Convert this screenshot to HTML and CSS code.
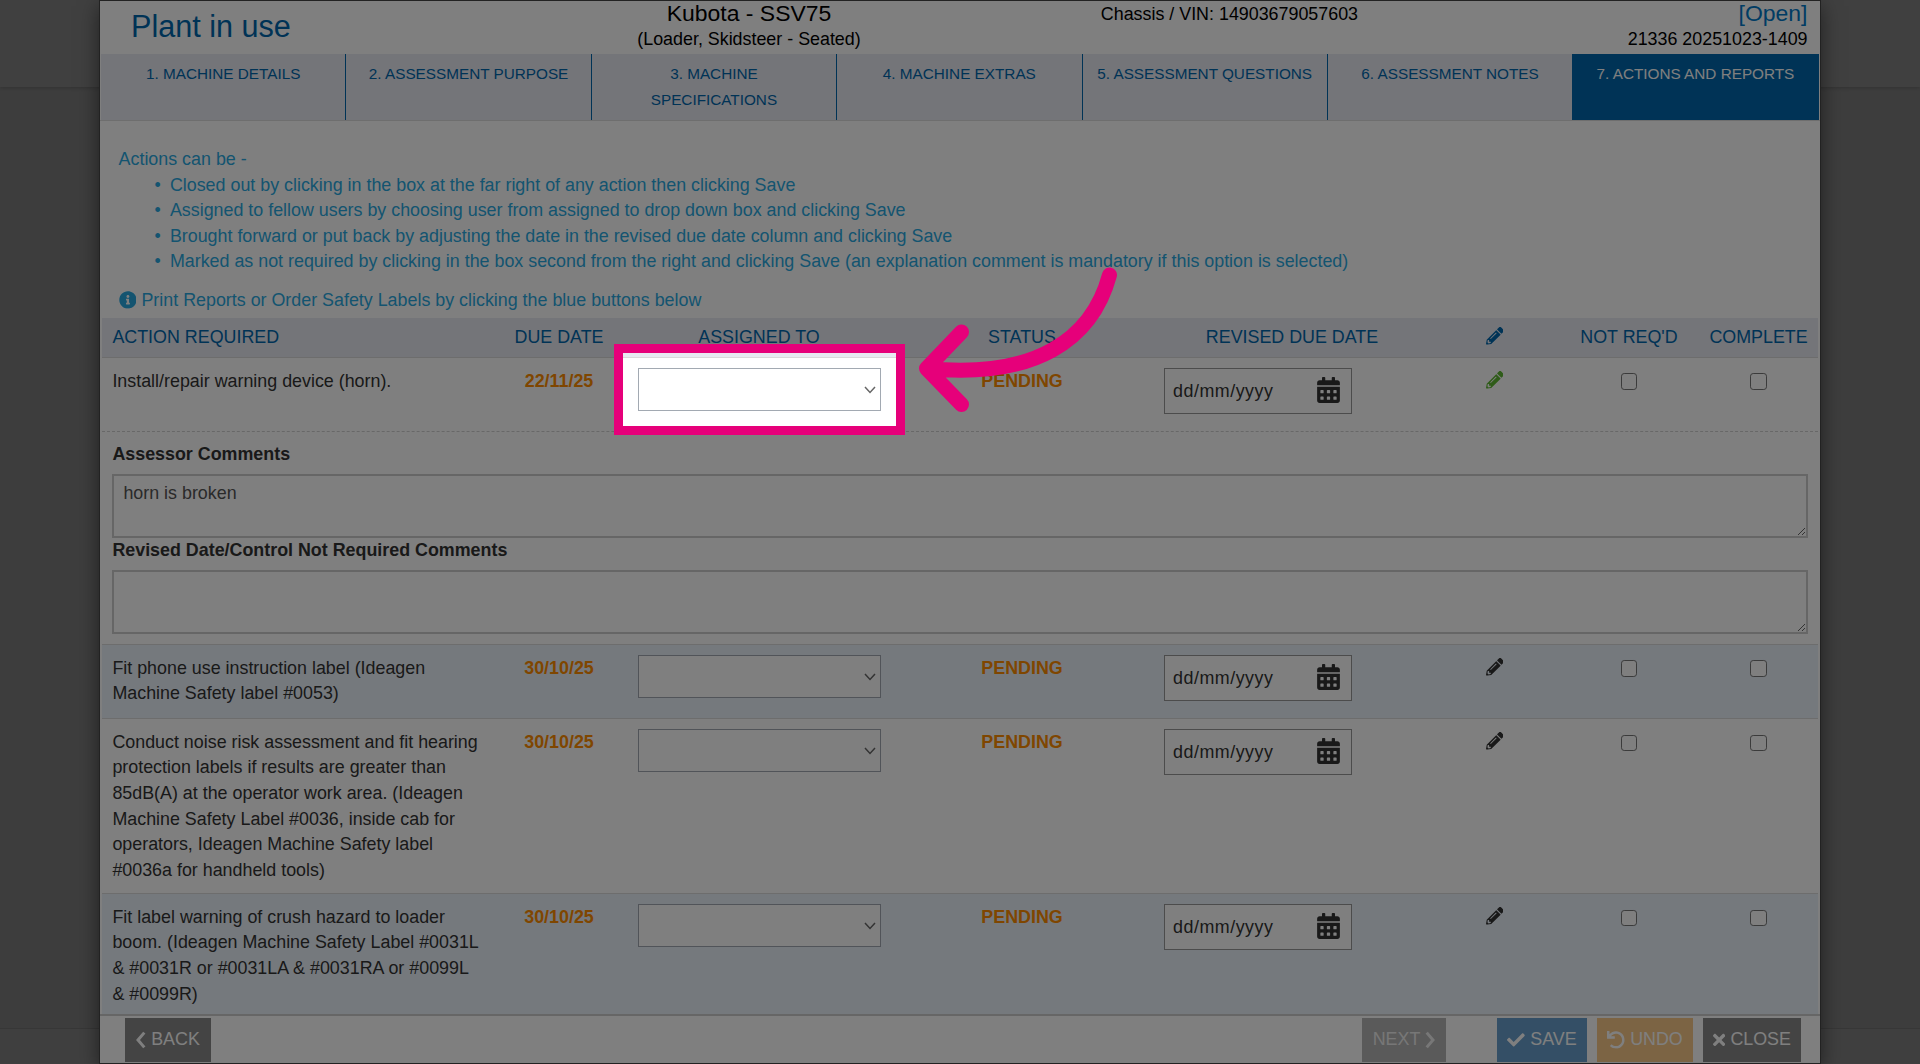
FILE: index.html
```
<!DOCTYPE html>
<html lang="en">
<head>
    <meta charset="UTF-8">
    <meta name="viewport" content="width=device-width, initial-scale=1.0">
    <title>Plant in use</title>
    <link rel="stylesheet" href="styles.css">
</head>
<body>
    <!-- Icon sprite -->
    <svg class="sprite" width="0" height="0">
        <symbol id="i-info" viewBox="0 0 512 512"><path d="M256 8C119.043 8 8 119.083 8 256c0 136.997 111.043 248 248 248s248-111.003 248-248C504 119.083 392.957 8 256 8zm0 110c23.196 0 42 18.804 42 42s-18.804 42-42 42-42-18.804-42-42 18.804-42 42-42zm56 254c0 6.627-5.373 12-12 12h-88c-6.627 0-12-5.373-12-12v-24c0-6.627 5.373-12 12-12h12v-64h-12c-6.627 0-12-5.373-12-12v-24c0-6.627 5.373-12 12-12h64c6.627 0 12 5.373 12 12v100h12c6.627 0 12 5.373 12 12v24z"/></symbol>
        <symbol id="i-pencil" viewBox="0 0 512 512"><path d="M497.9 142.1l-46.1 46.1c-4.7 4.7-12.3 4.7-17 0l-111-111c-4.7-4.7-4.7-12.3 0-17l46.1-46.1c18.7-18.7 49.1-18.7 67.9 0l60.1 60.1c18.8 18.7 18.8 49.1 0 67.9zM284.2 99.8L21.6 362.4.4 483.9c-2.9 16.4 11.4 30.6 27.8 27.8l121.5-21.3 262.6-262.6c4.7-4.7 4.7-12.3 0-17l-111-111c-4.8-4.7-12.4-4.7-17.1 0zM124.1 339.9c-5.5-5.5-5.5-14.3 0-19.8l154-154c5.5-5.5 14.3-5.5 19.8 0s5.5 14.3 0 19.8l-154 154c-5.5 5.5-14.3 5.5-19.8 0zM88 424h48v36.3l-64.5 11.3-31.1-31.1L51.7 376H88v48z"/></symbol>
        <symbol id="i-calendar" viewBox="0 0 448 512"><path d="M0 464c0 26.5 21.5 48 48 48h352c26.5 0 48-21.5 48-48V192H0v272zm320-196c0-6.6 5.4-12 12-12h40c6.6 0 12 5.4 12 12v40c0 6.6-5.4 12-12 12h-40c-6.6 0-12-5.4-12-12v-40zm0 128c0-6.6 5.4-12 12-12h40c6.6 0 12 5.4 12 12v40c0 6.6-5.4 12-12 12h-40c-6.6 0-12-5.4-12-12v-40zM192 268c0-6.6 5.4-12 12-12h40c6.6 0 12 5.4 12 12v40c0 6.6-5.4 12-12 12h-40c-6.6 0-12-5.4-12-12v-40zm0 128c0-6.6 5.4-12 12-12h40c6.6 0 12 5.4 12 12v40c0 6.6-5.4 12-12 12h-40c-6.6 0-12-5.4-12-12v-40zM64 268c0-6.6 5.4-12 12-12h40c6.6 0 12 5.4 12 12v40c0 6.6-5.4 12-12 12H76c-6.6 0-12-5.4-12-12v-40zm0 128c0-6.6 5.4-12 12-12h40c6.6 0 12 5.4 12 12v40c0 6.6-5.4 12-12 12H76c-6.6 0-12-5.4-12-12v-40zM400 64h-48V16c0-8.8-7.2-16-16-16h-32c-8.8 0-16 7.2-16 16v48H160V16c0-8.8-7.2-16-16-16h-32c-8.8 0-16 7.2-16 16v48H48C21.5 64 0 85.5 0 112v48h448v-48c0-26.5-21.5-48-48-48z"/></symbol>
        <symbol id="i-down" viewBox="0 0 12 8"><path d="M1 1l5 5.4L11 1" fill="none" stroke="currentColor" stroke-width="1.5"/></symbol>
        <symbol id="i-left" viewBox="0 0 10 18"><path d="M8.3 1.6L2 9l6.3 7.4" fill="none" stroke="currentColor" stroke-width="3"/></symbol>
        <symbol id="i-right" viewBox="0 0 10 18"><path d="M1.7 1.6L8 9l-6.3 7.4" fill="none" stroke="currentColor" stroke-width="3"/></symbol>
        <symbol id="i-check" viewBox="0 0 512 512"><path d="M173.898 439.404l-166.4-166.4c-9.997-9.997-9.997-26.206 0-36.204l36.203-36.204c9.997-9.998 26.207-9.998 36.204 0L192 312.69 432.095 72.596c9.997-9.997 26.207-9.997 36.204 0l36.203 36.204c9.997 9.997 9.997 26.206 0 36.204l-294.4 294.401c-9.998 9.997-26.207 9.997-36.204-.001z"/></symbol>
        <symbol id="i-undo" viewBox="0 0 512 512"><path d="M212.333 224.333H12c-6.627 0-12-5.373-12-12V12C0 5.373 5.373 0 12 0h48c6.627 0 12 5.373 12 12v78.112C117.773 39.279 184.26 7.47 258.175 8.007c136.906.994 246.448 111.623 246.157 248.532C504.041 393.258 393.12 504 256.333 504c-64.089 0-122.496-24.313-166.51-64.215-5.099-4.622-5.334-12.554-.467-17.42l33.967-33.967c4.474-4.474 11.662-4.717 16.401-.525C170.76 415.336 211.58 432 256.333 432c97.268 0 176-78.716 176-176 0-97.267-78.716-176-176-176-58.496 0-110.28 28.476-142.274 72.333h98.274c6.627 0 12 5.373 12 12v48c0 6.627-5.373 12-12 12z"/></symbol>
        <symbol id="i-times" viewBox="0 0 352 512"><path d="M242.72 256l100.07-100.07c12.28-12.28 12.28-32.19 0-44.48l-22.24-22.24c-12.28-12.28-32.19-12.28-44.48 0L176 189.28 75.93 89.21c-12.28-12.28-32.19-12.28-44.48 0L9.21 111.45c-12.28 12.28-12.28 32.19 0 44.48L109.28 256 9.21 356.07c-12.28 12.28-12.28 32.19 0 44.48l22.24 22.24c12.28 12.28 32.2 12.28 44.48 0L176 322.72l100.07 100.07c12.28 12.28 32.2 12.28 44.48 0l22.24-22.24c12.28-12.28 12.28-32.19 0-44.48L242.72 256z"/></symbol>
    </svg>

    <div class="page">
        <div class="page-top"></div>
        <div class="page-main"></div>
        <div class="page-bottom"></div>
    </div>

    <div class="modal">
        <header class="modal-header">
            <h1>Plant in use</h1>
            <div class="machine">
                <div class="large">Kubota - SSV75</div>
                <div>(Loader, Skidsteer - Seated)</div>
            </div>
            <div class="chassis">Chassis / VIN: 14903679057603</div>
            <div class="state">
                <div class="large open">[Open]</div>
                <div>21336 20251023-1409</div>
            </div>
        </header>

        <nav class="tabs">
            <a class="tab">1. MACHINE DETAILS</a>
            <a class="tab">2. ASSESSMENT PURPOSE</a>
            <a class="tab">3. MACHINE<br>SPECIFICATIONS</a>
            <a class="tab">4. MACHINE EXTRAS</a>
            <a class="tab">5. ASSESSMENT QUESTIONS</a>
            <a class="tab">6. ASSESSMENT NOTES</a>
            <a class="tab active">7. ACTIONS AND REPORTS</a>
        </nav>

        <div class="modal-body">
            <div class="info">
                <p>Actions can be -</p>
                <ul>
                    <li>Closed out by clicking in the box at the far right of any action then clicking Save</li>
                    <li>Assigned to fellow users by choosing user from assigned to drop down box and clicking Save</li>
                    <li>Brought forward or put back by adjusting the date in the revised due date column and clicking Save</li>
                    <li>Marked as not required by clicking in the box second from the right and clicking Save (an explanation comment is mandatory if this option is selected)</li>
                </ul>
                <p class="print"><svg class="icon"><use href="#i-info"/></svg>Print Reports or Order Safety Labels by clicking the blue buttons below</p>
            </div>

            <div class="row head">
                <div>ACTION REQUIRED</div>
                <div class="center">DUE DATE</div>
                <div class="center">ASSIGNED TO</div>
                <div class="center">STATUS</div>
                <div class="center">REVISED DUE DATE</div>
                <div class="center"><svg class="icon"><use href="#i-pencil"/></svg></div>
                <div class="center">NOT REQ'D</div>
                <div class="center">COMPLETE</div>
            </div>

            <div class="row first">
                <div>Install/repair warning device (horn).</div>
                <div class="center due">22/11/25</div>
                <div class="field"><select></select><svg class="arrow"><use href="#i-down"/></svg></div>
                <div class="center due">PENDING</div>
                <div class="field"><div class="date"><span>dd/mm/yyyy</span><svg class="calendar"><use href="#i-calendar"/></svg></div></div>
                <div class="center"><svg class="icon green"><use href="#i-pencil"/></svg></div>
                <div class="center"><input type="checkbox"></div>
                <div class="center"><input type="checkbox"></div>
            </div>

            <div class="comments">
                <label for="assessor">Assessor Comments</label>
                <textarea id="assessor">horn is broken</textarea>
                <label for="revised">Revised Date/Control Not Required Comments</label>
                <textarea id="revised"></textarea>
            </div>

            <div class="row shaded">
                <div>Fit phone use instruction label (Ideagen Machine Safety label #0053)</div>
                <div class="center due">30/10/25</div>
                <div class="field"><select></select><svg class="arrow"><use href="#i-down"/></svg></div>
                <div class="center due">PENDING</div>
                <div class="field"><div class="date"><span>dd/mm/yyyy</span><svg class="calendar"><use href="#i-calendar"/></svg></div></div>
                <div class="center"><svg class="icon"><use href="#i-pencil"/></svg></div>
                <div class="center"><input type="checkbox"></div>
                <div class="center"><input type="checkbox"></div>
            </div>

            <div class="row">
                <div>Conduct noise risk assessment and fit hearing protection labels if results are greater than 85dB(A) at the operator work area. (Ideagen Machine Safety Label #0036, inside cab for operators, Ideagen Machine Safety label #0036a for handheld tools)</div>
                <div class="center due">30/10/25</div>
                <div class="field"><select></select><svg class="arrow"><use href="#i-down"/></svg></div>
                <div class="center due">PENDING</div>
                <div class="field"><div class="date"><span>dd/mm/yyyy</span><svg class="calendar"><use href="#i-calendar"/></svg></div></div>
                <div class="center"><svg class="icon"><use href="#i-pencil"/></svg></div>
                <div class="center"><input type="checkbox"></div>
                <div class="center"><input type="checkbox"></div>
            </div>

            <div class="row shaded">
                <div>Fit label warning of crush hazard to loader boom. (Ideagen Machine Safety Label #0031L &amp; #0031R or #0031LA &amp; #0031RA or #0099L &amp; #0099R)</div>
                <div class="center due">30/10/25</div>
                <div class="field"><select></select><svg class="arrow"><use href="#i-down"/></svg></div>
                <div class="center due">PENDING</div>
                <div class="field"><div class="date"><span>dd/mm/yyyy</span><svg class="calendar"><use href="#i-calendar"/></svg></div></div>
                <div class="center"><svg class="icon"><use href="#i-pencil"/></svg></div>
                <div class="center"><input type="checkbox"></div>
                <div class="center"><input type="checkbox"></div>
            </div>
        </div>

        <footer class="modal-footer">
            <button class="btn back"><svg class="chevron"><use href="#i-left"/></svg>BACK</button>
            <button class="btn next">NEXT<svg class="chevron"><use href="#i-right"/></svg></button>
            <button class="btn save"><svg class="icon"><use href="#i-check"/></svg>SAVE</button>
            <button class="btn undo"><svg class="icon"><use href="#i-undo"/></svg>UNDO</button>
            <button class="btn close"><svg class="times"><use href="#i-times"/></svg>CLOSE</button>
        </footer>
    </div>

    <!-- Walkthrough highlight and pointer -->
    <div class="highlight"></div>
    <svg class="pointer" viewBox="910 260 210 160">
        <path d="M1109.5 275C1092 340 1035 379 927 368.5M961.5 332L926.5 368.5L961.5 404.5"/>
    </svg>
</body>
</html>
```

FILE: styles.css
```
:root {
    --blue: #0067ac;
    --info: #29a9e1;
    --orange: #ff8c00;
    --text: #333;
    --pink: #e6007a;
    --line: 25.53px;
}

* {
    box-sizing: border-box;
    margin: 0;
    padding: 0;
}

body {
    height: 1064px;
    overflow: hidden;
    position: relative;
    font-family: "Liberation Sans", Arial, sans-serif;
    font-size: 17.86px;
    line-height: var(--line);
    color: var(--text);
}

.sprite {
    position: absolute;
}

svg {
    fill: currentColor;
    flex: none;
}

.icon {
    width: 17.86px;
    height: 17.86px;
}

/* Page behind the dialog */
.page {
    height: 100%;
    display: flex;
    flex-direction: column;
    background-color: #7b7b7b;
}

.page-top {
    height: 87px;
    background-color: #808080;
    box-shadow: 0 1px 4px rgba(0, 0, 0, 0.2);
}

.page-main {
    flex: 1;
}

.page-bottom {
    height: 36px;
    background-color: #7f7f7f;
    border-top: 1px solid #6e6e6e;
}

/* Dialog */
.modal {
    position: absolute;
    top: 0;
    left: 99px;
    width: 1722px;
    height: 1064px;
    display: flex;
    flex-direction: column;
    background-color: #fff;
    border: 1px solid #444;
    box-shadow: 0 6px 19px rgba(0, 0, 0, 0.5);
}

.modal-header {
    height: 53px;
    flex: none;
    display: grid;
    grid-template-columns: 432px 372px 458px 1fr;
    padding: 0.4px 12.5px 0 31px;
    color: #000;
}

.modal-header h1 {
    font-size: 30.6px;
    font-weight: normal;
    line-height: 34px;
    padding-top: 7.6px;
    color: var(--blue);
}

.large {
    font-size: 22.96px;
}

.machine {
    text-align: center;
}

.chassis {
    text-align: right;
    padding-top: 0.4px;
    padding-right: 35px;
}

.state {
    text-align: right;
}

.open {
    color: #0078c8;
}

.tabs {
    display: flex;
    flex: none;
    height: 66.5px;
    padding: 0 1.4px 0 1px;
    border-bottom: 1px solid #ddd;
}

.tab {
    flex: 1;
    padding: 7px 12px;
    text-align: center;
    font-size: 15.3px;
    color: var(--blue);
    background-color: #e8eaf2;
    border-right: 1.5px solid var(--blue);
}

.tab.active {
    color: #fff;
    background-color: var(--blue);
}

.modal-body {
    flex: 1;
    min-height: 0;
    overflow: hidden;
    padding: 26.8px 2px 0;
}

.info {
    height: 170.7px;
    padding-left: 16.6px;
    color: var(--info);
}

.info ul {
    list-style: none;
    padding-left: 51.3px;
    margin-bottom: 12.6px;
}

.info li::before {
    content: "•";
    display: inline-block;
    width: 15.4px;
    margin-left: -15.4px;
}

.print {
    display: flex;
    align-items: center;
    gap: 5px;
}

.row {
    display: grid;
    grid-template-columns: 388px 138px 262px 264px 276px 129px 140px 119px;
    min-height: 74.3px;
    padding: 10px 0 10.2px;
    border-top: 1px solid #dadada;
}

.row > div {
    padding: 0.6px 6px 0 10.4px;
}

.row > .center {
    padding: 0.6px 0 0;
    text-align: center;
}

.row > .field {
    position: relative;
    padding: 0 10px;
}

.row .icon {
    vertical-align: -2.2px;
}

.row.head {
    min-height: 0;
    height: 39px;
    padding: 6.4px 0 0;
    border-top: 0;
    color: var(--blue);
    background-color: #e8eaf2;
}

.row.first {
    min-height: 73.7px;
}

.row.shaded {
    background-color: #ebf2fb;
}

.due {
    font-weight: bold;
    color: var(--orange);
}

.green {
    color: #5fb832;
}

select {
    display: block;
    width: 242.5px;
    height: 43px;
    appearance: none;
    background-color: #fff;
    border: 1px solid #a2a9b2;
}

.arrow {
    position: absolute;
    right: 14px;
    top: 18px;
    width: 12px;
    height: 8px;
    color: #666;
}

.date {
    display: flex;
    align-items: center;
    justify-content: space-between;
    width: 188px;
    height: 46px;
    padding: 0 11.5px 0 8px;
    background-color: #fff;
    border: 1px solid #999;
}

.date span {
    padding-top: 1.4px;
    letter-spacing: 0.52px;
}

.calendar {
    width: 23px;
    height: 26px;
    margin-bottom: 2px;
}

input[type="checkbox"] {
    appearance: none;
    width: 16.6px;
    height: 16.6px;
    vertical-align: -3.4px;
    background-color: #fff;
    border: 1.3px solid #767676;
    border-radius: 3.2px;
}

.comments {
    display: flex;
    flex-direction: column;
    height: 213.4px;
    padding: 10.4px 10px 0;
    border-top: 1px dashed #d0d0d0;
}

.comments label {
    font-weight: bold;
    margin-bottom: 6.2px;
    padding-left: 0.4px;
}

textarea {
    width: 100%;
    height: 64px;
    flex: none;
    padding: 4.8px 9.4px;
    font: inherit;
    color: #555;
    border: 2px solid #ccc;
}

/* Footer buttons */
.modal-footer {
    display: flex;
    flex: none;
    height: 49px;
    padding: 2px 19px 0 25px;
    border-top: 2px solid #ccc;
}

.btn {
    display: flex;
    align-items: center;
    justify-content: center;
    height: 44px;
    font: inherit;
    color: #fff;
    border: 0;
}

.back {
    width: 86px;
    gap: 5px;
    background-color: #888;
}

.next {
    width: 84px;
    gap: 5px;
    margin-left: auto;
    color: #eee;
    background-color: #b4b4b4;
}

.save {
    width: 90px;
    gap: 5px;
    margin-left: 51px;
    background-color: #689fcc;
}

.undo {
    width: 96px;
    gap: 5px;
    margin-left: 10px;
    background-color: #f8c888;
}

.close {
    width: 98px;
    gap: 5px;
    margin-left: 10px;
    background-color: #888;
}

.chevron {
    width: 10px;
    height: 18px;
}

.times {
    width: 12.3px;
    height: 17.86px;
}

/* Walkthrough overlay */
.highlight {
    position: absolute;
    left: 614px;
    top: 344px;
    width: 291px;
    height: 91px;
    border: 9px solid var(--pink);
    box-shadow: 0 0 0 2000px rgba(0, 0, 0, 0.5);
}

.pointer {
    position: absolute;
    left: 910px;
    top: 260px;
    width: 210px;
    height: 160px;
}

.pointer path {
    fill: none;
    stroke: var(--pink);
    stroke-width: 15;
    stroke-linecap: round;
    stroke-linejoin: round;
}
```
